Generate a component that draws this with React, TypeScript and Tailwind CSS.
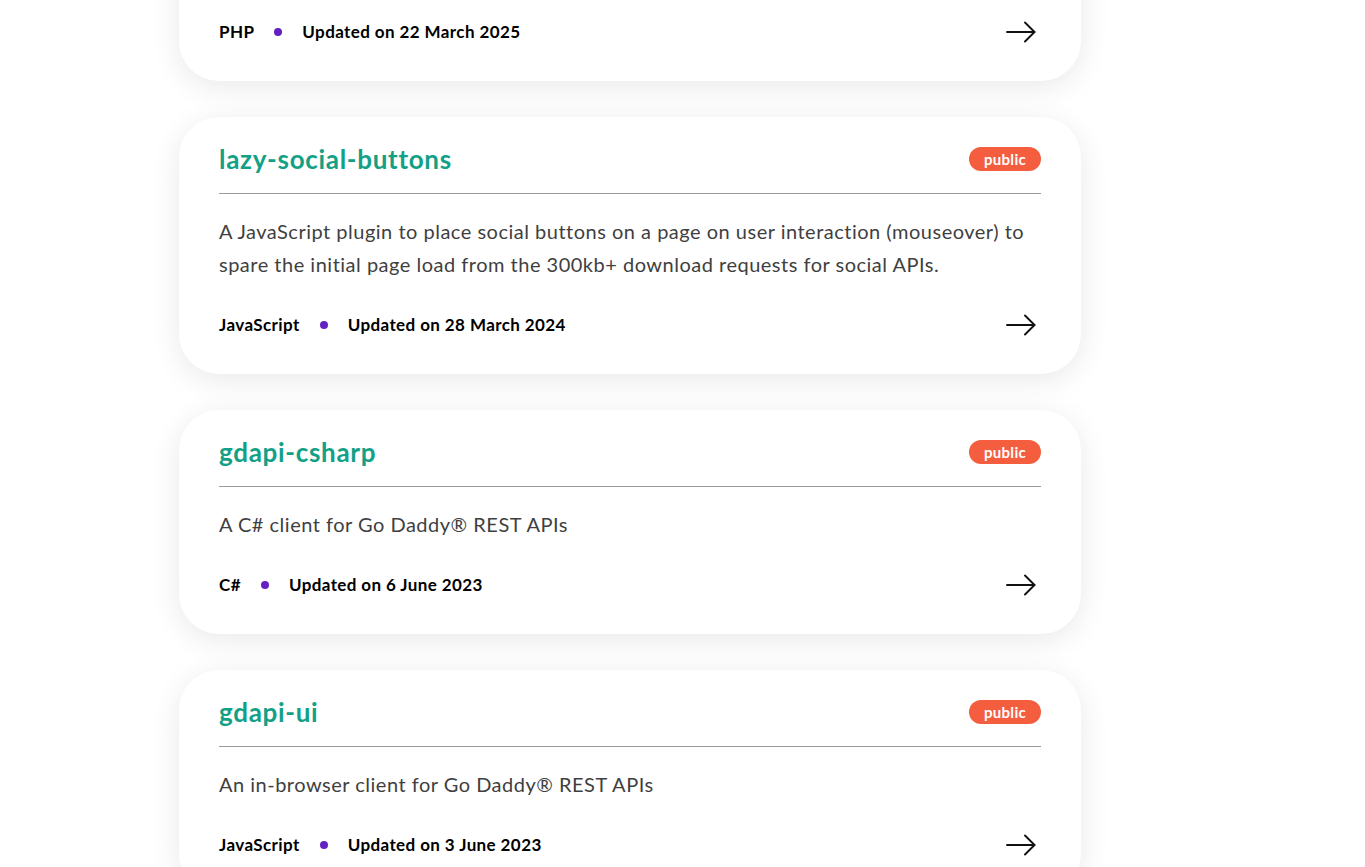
import React from "react";

type Repo = {
  name: string;
  desc: string;
  lang: string;
  updated: string;
};

const repos: Repo[] = [
  {
    name: "php-helpers",
    desc: "A collection of PHP helpers for everyday web development tasks.",
    lang: "PHP",
    updated: "Updated on 22 March 2025",
  },
  {
    name: "lazy-social-buttons",
    desc: "A JavaScript plugin to place social buttons on a page on user interaction (mouseover) to spare the initial page load from the 300kb+ download requests for social APIs.",
    lang: "JavaScript",
    updated: "Updated on 28 March 2024",
  },
  {
    name: "gdapi-csharp",
    desc: "A C# client for Go Daddy\u00ae REST APIs",
    lang: "C#",
    updated: "Updated on 6 June 2023",
  },
  {
    name: "gdapi-ui",
    desc: "An in-browser client for Go Daddy\u00ae REST APIs",
    lang: "JavaScript",
    updated: "Updated on 3 June 2023",
  },
];

function Arrow() {
  return (
    <svg width="30" height="24" viewBox="0 0 30 24" fill="none" className="mr-[5px] block">
      <path d="M1 12 H28.5" stroke="#111" strokeWidth="1.9" strokeLinecap="round" />
      <path d="M19 2.5 L28.5 12 L19 21.5" stroke="#111" strokeWidth="1.9" strokeLinecap="round" strokeLinejoin="round" />
    </svg>
  );
}

function Card({ repo }: { repo: Repo }) {
  return (
    <div className="rounded-[40px] bg-white px-10 pt-[26px] pb-[37px] shadow-[0_6px_30px_rgba(0,0,0,0.09)]">
      <div className="flex h-8 items-center justify-between">
        <h2 className="text-[26px] font-bold leading-8 tracking-[0.7px] text-[#12a086]">{repo.name}</h2>
        <span className="flex h-6 w-[72px] items-center justify-center rounded-full bg-[#f45d3e] text-[15px] font-bold tracking-[0.3px] text-white">
          public
        </span>
      </div>
      <div className="mt-[18px] border-t border-[#9a9a9a]" />
      <p className="mt-[21px] text-[20px] leading-[33px] tracking-[0.5px] text-[#3f3f3f]">{repo.desc}</p>
      <div className="mt-[32px] flex h-6 items-center justify-between">
        <div className="flex items-center text-[17px] font-bold tracking-[0.4px] text-black">
          <span>{repo.lang}</span>
          <span className="mx-5 h-2 w-2 rounded-full bg-[#6520c4]" />
          <span>{repo.updated}</span>
        </div>
        <Arrow />
      </div>
    </div>
  );
}

export default function App() {
  return (
    <div
      className="min-h-screen overflow-hidden bg-white"
      style={{ fontFamily: "Lato, 'Noto Sans', sans-serif" }}
    >
      <div className="ml-[179px] mt-[-143px] flex w-[902px] flex-col gap-9">
        {repos.map((r) => (
          <Card key={r.name} repo={r} />
        ))}
      </div>
    </div>
  );
}
